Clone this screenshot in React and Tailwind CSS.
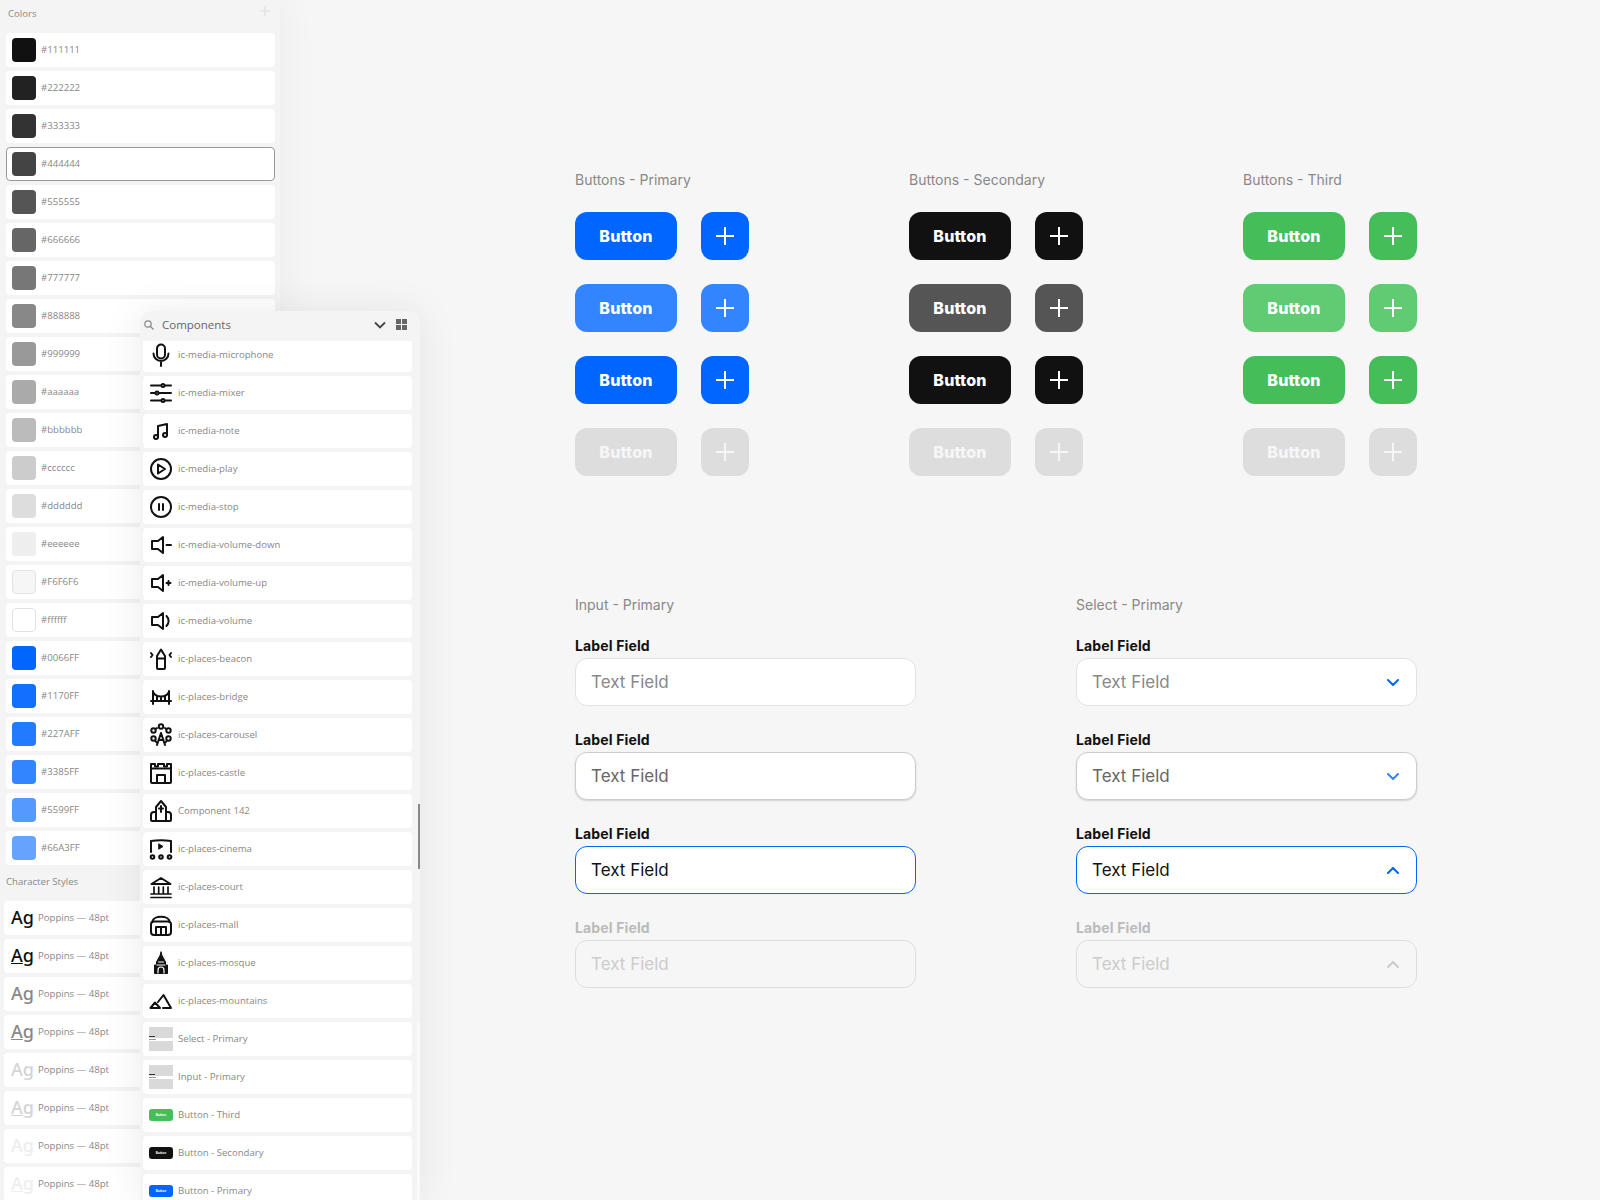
import React from 'react';

const colors = [
  ['#111111', '#111111'], ['#222222', '#222222'], ['#333333', '#333333'], ['#444444', '#444444'],
  ['#555555', '#555555'], ['#666666', '#666666'], ['#777777', '#777777'], ['#888888', '#888888'],
  ['#999999', '#999999'], ['#aaaaaa', '#aaaaaa'], ['#bbbbbb', '#bbbbbb'], ['#cccccc', '#cccccc'],
  ['#dddddd', '#dddddd'], ['#eeeeee', '#eeeeee'], ['#F6F6F6', '#F6F6F6'], ['#ffffff', '#ffffff'],
  ['#0066FF', '#0066FF'], ['#1170FF', '#1170FF'], ['#227AFF', '#227AFF'], ['#3385FF', '#3385FF'],
  ['#5599FF', '#5599FF'], ['#66A3FF', '#66A3FF'],
];

const charStyles = [
  { color: 'text-[#111111]', line: false },
  { color: 'text-[#111111]', line: true },
  { color: 'text-[#888888]', line: false },
  { color: 'text-[#888888]', line: true },
  { color: 'text-[#d4d4d4]', line: false },
  { color: 'text-[#d4d4d4]', line: true },
  { color: 'text-[#eeeeee]', line: false },
  { color: 'text-[#eeeeee]', line: true },
];

const Icon = ({ children }) => (
  <svg width="24" height="24" viewBox="0 0 24 24" fill="none" stroke="#111111" strokeWidth="2" strokeLinecap="round" strokeLinejoin="round" className="shrink-0">
    {children}
  </svg>
);

const speaker = 'M3 8h6l5-4v16l-5-4H3z';

const icons = {
  microphone: (
    <>
      <path d="M12 1.500a4 4 0 0 0-4 4v6a4 4 0 0 0 8 0v-6a4 4 0 0 0-4-4z" />
      <path d="M4.500 10.500a7.500 7.500 0 0 0 15 0M12 18v5" />
    </>
  ),
  mixer: (
    <>
      <path d="M2 4.500h20M2 12h20M2 19.500h20" />
      <circle cx="14" cy="4.500" r="1.500" fill="#fff" />
      <circle cx="8" cy="12" r="1.500" fill="#fff" />
      <circle cx="14" cy="19.500" r="1.500" fill="#fff" />
    </>
  ),
  note: (
    <>
      <path d="M9 18V7l9-2v11" />
      <circle cx="7" cy="18" r="2" />
      <circle cx="16" cy="16" r="2" />
    </>
  ),
  play: (
    <>
      <circle cx="12" cy="12" r="10" />
      <path d="M9 7.500l7 4.500-7 4.500z" />
    </>
  ),
  stop: (
    <>
      <circle cx="12" cy="12" r="10" />
      <path d="M10 9v6M14 9v6" />
    </>
  ),
  volumeDown: (
    <>
      <path d={speaker} />
      <path d="M17.500 12h4.500" />
    </>
  ),
  volumeUp: (
    <>
      <path d={speaker} />
      <path d="M17.500 12h4M19.500 10v4" />
    </>
  ),
  volume: (
    <>
      <path d={speaker} />
      <path d="M17.500 7a7 7 0 0 1 0 10" />
    </>
  ),
  beacon: (
    <>
      <path d="M8 21V9l4-6.500L16 9v12a1 1 0 0 1-1 1H9a1 1 0 0 1-1-1zM8 11.500h8" />
      <path d="M2 6l1.500 2L2 10M22 6l-1.500 2 1.500 2" />
    </>
  ),
  bridge: (
    <>
      <path d="M2 16h20M4 6v13M20 6v13" />
      <path d="M4 7c3 6 13 6 16 0M8 12v4M12 13v3M16 12v4" />
    </>
  ),
  carousel: (
    <>
      <circle cx="12" cy="3.500" r="2.200" />
      <circle cx="4.500" cy="7.500" r="2.200" />
      <circle cx="19.500" cy="7.500" r="2.200" />
      <circle cx="4.500" cy="15.500" r="2.200" />
      <circle cx="19.500" cy="15.500" r="2.200" />
      <path d="M12 10l-4 12M12 10l4 12M9.500 17h5" />
      <path d="M8 5l-1.500 1M16 5l1.500 1M7.500 19.500l-1-1.500M16.500 19.500l1-1.500" />
    </>
  ),
  castle: (
    <>
      <path d="M2 8V3h4v2.500h3V3h6v2.500h3V3h4v5" />
      <rect x="2" y="7.500" width="20" height="14.500" rx="1" />
      <path d="M8 22v-8h8v8" />
    </>
  ),
  church: (
    <>
      <path d="M7 22V8l5-6 5 6v14" />
      <path d="M7 13H5a3 3 0 0 0-3 3v5a1 1 0 0 0 1 1h18a1 1 0 0 0 1-1v-5a3 3 0 0 0-3-3h-2" />
      <path d="M12 7v6M10 9.500h4" />
    </>
  ),
  cinema: (
    <>
      <path d="M2 15V4c7-1.200 13-1.200 20 0v11" />
      <path d="M10 7l4 2.500-4 2.500z" fill="#111111" strokeWidth="1" />
      <circle cx="3.500" cy="20" r="1.800" />
      <circle cx="12" cy="20" r="1.800" />
      <circle cx="20.500" cy="20" r="1.800" />
    </>
  ),
  court: (
    <>
      <path d="M2.500 9L12 3l9.500 6z" />
      <path d="M5 12v6M9.700 12v6M14.300 12v6M19 12v6M2 19h20M2 22.500h20" strokeWidth="1.700" />
    </>
  ),
  mall: (
    <>
      <path d="M3.500 9c0-7 17-7 17 0" />
      <rect x="2" y="8.500" width="20" height="13.500" rx="3" />
      <path d="M7 22v-8h10v8M12 14v8" />
    </>
  ),
  mosque: (
    <>
      <path d="M12 1l-1 3.500L7.500 11v3H5.500v8.500h13V14h-2v-3L13 4.500z" fill="#111111" strokeWidth="1" />
      <path d="M9.500 11h5M8 14h8M9 22v-3a3 3 0 0 1 6 0v3" stroke="#fff" strokeWidth="1.200" />
    </>
  ),
  mountains: (
    <>
      <path d="M9 13l5.500-7L22 19h-8" />
      <path d="M1.500 19L6 13.500l5 5.500z" />
    </>
  ),
};

const FormThumb = () => (
  <div className="relative flex h-6 w-6 shrink-0 flex-col justify-center bg-[#d9d9d9]">
    <div className="h-[3px] bg-white" />
    <div className="absolute left-0 top-[9px] h-px w-[6px] bg-[#333333]" />
    <div className="absolute left-0 top-[12px] h-px w-[7px] bg-[#999999]" />
  </div>
);

const ButtonThumb = ({ color }) => (
  <div className={`flex h-3 w-6 shrink-0 items-center justify-center rounded-[3px] ${color}`}>
    <span className="text-[3px] leading-none font-bold text-white">Button</span>
  </div>
);

const components = [
  ['ic-media-microphone', <Icon>{icons.microphone}</Icon>],
  ['ic-media-mixer', <Icon>{icons.mixer}</Icon>],
  ['ic-media-note', <Icon>{icons.note}</Icon>],
  ['ic-media-play', <Icon>{icons.play}</Icon>],
  ['ic-media-stop', <Icon>{icons.stop}</Icon>],
  ['ic-media-volume-down', <Icon>{icons.volumeDown}</Icon>],
  ['ic-media-volume-up', <Icon>{icons.volumeUp}</Icon>],
  ['ic-media-volume', <Icon>{icons.volume}</Icon>],
  ['ic-places-beacon', <Icon>{icons.beacon}</Icon>],
  ['ic-places-bridge', <Icon>{icons.bridge}</Icon>],
  ['ic-places-carousel', <Icon>{icons.carousel}</Icon>],
  ['ic-places-castle', <Icon>{icons.castle}</Icon>],
  ['Component 142', <Icon>{icons.church}</Icon>],
  ['ic-places-cinema', <Icon>{icons.cinema}</Icon>],
  ['ic-places-court', <Icon>{icons.court}</Icon>],
  ['ic-places-mall', <Icon>{icons.mall}</Icon>],
  ['ic-places-mosque', <Icon>{icons.mosque}</Icon>],
  ['ic-places-mountains', <Icon>{icons.mountains}</Icon>],
  ['Select - Primary', <FormThumb />],
  ['Input - Primary', <FormThumb />],
  ['Button - Third', <ButtonThumb color="bg-[#45BE5A]" />],
  ['Button - Secondary', <ButtonThumb color="bg-[#111111]" />],
  ['Button - Primary', <ButtonThumb color="bg-[#0066FF]" />],
];

const buttonGroups = [
  {
    title: 'Buttons - Primary',
    states: ['bg-[#0066FF] text-white', 'bg-[#3385FF] text-white', 'bg-[#0066FF] text-white', 'bg-[#DDDDDD] text-[#F6F6F6]'],
  },
  {
    title: 'Buttons - Secondary',
    states: ['bg-[#111111] text-white', 'bg-[#555555] text-white', 'bg-[#111111] text-white', 'bg-[#DDDDDD] text-[#F6F6F6]'],
  },
  {
    title: 'Buttons - Third',
    states: ['bg-[#45BE5A] text-white', 'bg-[#60CB72] text-white', 'bg-[#45BE5A] text-white', 'bg-[#DDDDDD] text-[#F6F6F6]'],
  },
];

const fieldStates = [
  { label: 'text-[#111111]', box: 'border-[#E2E2E2] bg-white', text: 'text-[#888888]', chevron: '#0066FF', up: false },
  { label: 'text-[#111111]', box: 'border-[#CCCCCC] bg-white shadow-[0_1px_2px_rgba(0,0,0,0.15)]', text: 'text-[#666666]', chevron: '#3385FF', up: false },
  { label: 'text-[#111111]', box: 'border-[#0066FF] bg-white', text: 'text-[#111111]', chevron: '#0066FF', up: true },
  { label: 'text-[#BBBBBB]', box: 'border-[#DDDDDD] bg-[#F6F6F6]', text: 'text-[#CCCCCC]', chevron: '#CCCCCC', up: true },
];

const Plus = () => (
  <svg width="18" height="18" viewBox="0 0 18 18" fill="none" stroke="currentColor" strokeWidth="2">
    <path d="M9 0v18M0 9h18" />
  </svg>
);

const Chevron = ({ color, up }) => (
  <svg width="12" height="7" viewBox="0 0 12 7" fill="none" stroke={color} strokeWidth="2" strokeLinecap="round" strokeLinejoin="round">
    <path d={up ? 'M1 6l5-5 5 5' : 'M1 1l5 5 5-5'} />
  </svg>
);

const Field = ({ state, select }) => (
  <div className="flex flex-col gap-[2px]">
    <div className={`h-5 font-['Inter'] text-sm leading-5 font-bold tracking-[0.01em] ${state.label}`}>Label Field</div>
    <div className={`flex h-12 items-center justify-between rounded-xl border pl-[15px] pr-[17px] font-['Inter'] text-[17px] ${state.box} ${state.text}`}>
      <span className="pt-[2px]">Text Field</span>
      {select && <Chevron color={state.chevron} up={state.up} />}
    </div>
  </div>
);

const FieldColumn = ({ title, select }) => (
  <div className="w-[341px]">
    <div className="mb-[21px] h-5 font-['Inter'] text-sm leading-5 text-[#888888]">{title}</div>
    <div className="flex flex-col gap-6">
      {fieldStates.map((state, i) => (
        <Field key={i} state={state} select={select} />
      ))}
    </div>
  </div>
);

const Sidebar = () => (
  <aside className="relative h-[1200px] w-[280px] shrink-0 overflow-visible bg-[#F4F4F4] font-['Open_Sans'] shadow-[0_0_40px_rgba(0,0,0,0.05)]">
    <div className="flex h-[33px] items-start justify-between pl-2 pr-[9px] pt-2">
      <span className="text-[9.6px] leading-[12px] text-[#888888]">Colors</span>
      <svg width="12" height="12" viewBox="0 0 12 12" fill="none" stroke="#DDDDDD" strokeWidth="1" className="-mt-[3px]">
        <path d="M6 1v10M1 6h10" />
      </svg>
    </div>
    <div className="flex flex-col gap-1 pl-[6px] pr-[5px]">
      {colors.map(([name, hex], i) => (
        <div key={name} className={`flex h-[34px] items-center gap-[5px] rounded-sm bg-white ${i === 3 ? 'border border-[#999999] pl-[5px]' : 'pl-[6px]'}`}>
          <div
            className={`h-6 w-6 rounded-sm ${i === 14 || i === 15 ? 'border border-[#E2E2E2]' : ''}`}
            style={{ backgroundColor: hex }}
          />
          <span className="text-[9.6px] text-[#888888]">{name}</span>
        </div>
      ))}
    </div>
    <div className="mt-1 h-[26px] pl-[6px] text-[9.6px] leading-[26px] text-[#888888]">Character Styles</div>
    <div className="mt-[6px] flex flex-col gap-1 pl-1 pr-[5px]">
      {charStyles.map((style, i) => (
        <div key={i} className="flex h-[34px] items-center gap-1 rounded-sm bg-white pl-[7px]">
          <span className={`-mt-[2px] font-['Noto_Sans'] text-[18px] leading-none font-medium ${style.color}`}>
            <span className={style.line ? 'underline decoration-1 underline-offset-1' : ''}>A</span>g
          </span>
          <span className="text-[9.6px] text-[#888888]">Poppins — 48pt</span>
        </div>
      ))}
    </div>
  </aside>
);

const ComponentsPanel = () => (
  <div className="absolute left-[140px] top-[311px] z-20 flex h-[889px] w-[280px] flex-col rounded-t-xl bg-[#F4F4F4] font-['Open_Sans'] shadow-[0_0_40px_rgba(0,0,0,0.08)]">
    <div className="flex h-[30px] shrink-0 items-center pb-[3px] pl-[3px] pr-[13px]">
      <svg width="12" height="12" viewBox="0 0 12 12" fill="none" stroke="#888888" strokeWidth="1.200">
        <circle cx="5" cy="5" r="3.200" />
        <path d="M7.500 7.500L10.500 10.500" />
      </svg>
      <span className="ml-[7px] flex-1 text-[11.5px] text-[#666666]">Components</span>
      <svg width="12" height="8" viewBox="0 0 12 8" fill="none" stroke="#444444" strokeWidth="1.800" className="mr-[10px]">
        <path d="M1 1.500l5 5 5-5" />
      </svg>
      <div className="grid h-[11px] w-[11px] grid-cols-2 gap-px">
        <div className="bg-[#666666]" />
        <div className="bg-[#666666]" />
        <div className="bg-[#666666]" />
        <div className="bg-[#666666]" />
      </div>
    </div>
    <div className="relative flex-1 overflow-hidden">
      <div className="-mt-[3px] flex flex-col gap-1 pl-[3px] pr-[8px]">
        {components.map(([name, icon]) => (
          <div key={name} className="flex h-[34px] shrink-0 items-center gap-[5px] rounded-sm bg-white pl-[6px]">
            <div className="flex h-6 w-6 shrink-0 items-center justify-center">{icon}</div>
            <span className="text-[9.6px] text-[#888888]">{name}</span>
          </div>
        ))}
      </div>
      <div className="absolute right-0 top-[463px] h-[65px] w-[2px] bg-[#888888]" />
      <div className="absolute bottom-0 right-0 top-[681px] w-[3px] bg-[#FAFAFA]" />
    </div>
  </div>
);

export default function App() {
  return (
    <div className="relative flex h-[1200px] w-full overflow-hidden bg-[#F6F6F6]">
      <Sidebar />
      <ComponentsPanel />
      <main className="flex-1 pl-[295px] pt-[170px]">
        <div className="flex">
          {buttonGroups.map((group) => (
            <div key={group.title} className="w-[334px]">
              <div className="mb-[22px] h-5 font-['Inter'] text-sm leading-5 text-[#888888]">{group.title}</div>
              <div className="flex flex-col gap-6">
                {group.states.map((state, i) => (
                  <div key={i} className="flex gap-6">
                    <div className={`flex h-12 w-[102px] items-center justify-center rounded-xl font-['Inter'] text-base font-extrabold tracking-[0.01em] ${state}`}>
                      Button
                    </div>
                    <div className={`flex h-12 w-12 items-center justify-center rounded-xl ${state}`}>
                      <Plus />
                    </div>
                  </div>
                ))}
              </div>
            </div>
          ))}
        </div>
        <div className="mt-[119px] flex gap-40">
          <FieldColumn title="Input - Primary" />
          <FieldColumn title="Select - Primary" select />
        </div>
      </main>
    </div>
  );
}
